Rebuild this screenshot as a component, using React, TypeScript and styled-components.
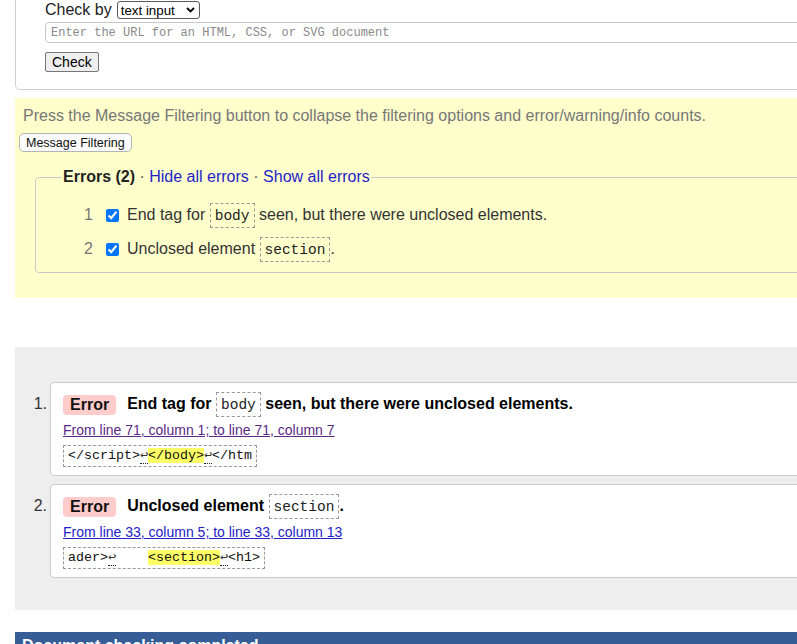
import React from "react";
import styled, { createGlobalStyle } from "styled-components";

const GlobalStyle = createGlobalStyle`
  html, body {
    margin: 0;
    padding: 0;
    overflow: hidden;
    background: #fff;
  }
  body {
    font-family: "Liberation Sans", Arial, sans-serif;
    font-size: 16px;
    color: #222;
  }
`;

const Page = styled.div`
  width: 1000px;
  padding-left: 15px;
  box-sizing: border-box;
`;

const FormBox = styled.div`
  border: 1px solid #cfcfcf;
  border-top: none;
  border-radius: 0 0 5px 5px;
  padding: 0 0 17px 29px;
`;

const CheckRow = styled.div`
  display: flex;
  align-items: center;
  gap: 5px;
  height: 20px;
  line-height: 18px;
  color: #222;
`;

const SelectWrap = styled.span`
  position: relative;
  display: inline-block;
  height: 18px;
`;

const Select = styled.select`
  appearance: none;
  -webkit-appearance: none;
  display: block;
  width: 83px;
  height: 18px;
  box-sizing: border-box;
  border: 1px solid #5a5a5a;
  border-radius: 3px;
  background: #fff;
  font-family: "Liberation Sans", Arial, sans-serif;
  font-size: 13.33px;
  color: #000;
  padding: 0 0 0 3px;
  margin: 0;
`;

const Chevron = styled.svg`
  position: absolute;
  right: 5px;
  top: 6px;
  pointer-events: none;
`;

const UrlInput = styled.input`
  display: block;
  width: 100%;
  height: 21px;
  box-sizing: border-box;
  margin: 2px 0 0 0;
  border: 1px solid #c8c8c8;
  border-radius: 4px;
  padding: 0 5px;
  font-family: "Liberation Mono", "DejaVu Sans Mono", monospace;
  font-size: 12px;
  &::placeholder {
    color: #8a8a8a;
  }
`;

const GreyButton = styled.button`
  display: block;
  margin-top: 9px;
  height: 20px;
  padding: 0 6px;
  box-sizing: border-box;
  border: 1px solid #767676;
  border-radius: 2px;
  background: #efefef;
  font-family: "Liberation Sans", Arial, sans-serif;
  font-size: 14px;
  color: #000;
`;

const FilterPanel = styled.div`
  margin-top: 8px;
  background: #ffffcc;
  padding: 9px 0 25px 4px;
`;

const Intro = styled.p`
  margin: 0;
  padding-left: 4px;
  color: #777;
  font-size: 16px;
  line-height: 18px;
`;

const FilterButton = styled.button`
  display: block;
  margin-top: 8px;
  height: 19px;
  padding: 0 6px;
  box-sizing: border-box;
  border: 1px solid #b4b4b4;
  border-radius: 5px;
  background: #fbfbfb;
  font-family: "Liberation Sans", Arial, sans-serif;
  font-size: 12.5px;
  color: #111;
`;

const Fieldset = styled.fieldset`
  margin: 16px 0 0 16px;
  padding: 0 0 6px 26px;
  border: 1px solid #c9c9c9;
  border-radius: 4px;
  min-width: 0;
`;

const Legend = styled.legend`
  padding: 0 1px;
  font-size: 16px;
  line-height: 18px;
  color: #555;
`;

const LegendTitle = styled.strong`
  color: #222;
`;

const BlueLink = styled.a`
  color: #2323c8;
  text-decoration: none;
`;

const FilterList = styled.div`
  margin-top: 12px;
  display: flex;
  flex-direction: column;
`;

const FilterRow = styled.div`
  display: flex;
  align-items: center;
  height: 34px;
`;

const RowNum = styled.span`
  width: 31px;
  text-align: right;
  color: #777;
  line-height: 18px;
`;

const Check = styled.input`
  margin: 0 8px 0 13px;
  width: 13px;
  height: 13px;
  accent-color: #0075ff;
`;

const RowText = styled.span`
  color: #333;
  line-height: 18px;
`;

const Code = styled.code<{ $bg?: string }>`
  display: inline-block;
  font-family: "Liberation Mono", "DejaVu Sans Mono", monospace;
  font-size: 14.5px;
  font-weight: normal;
  line-height: 17px;
  padding: 4px 4px 2px;
  border: 1px dashed #999;
  color: #222;
  background: ${(p) => p.$bg || "transparent"};
`;

const ResultsPanel = styled.div`
  margin-top: 49px;
  background: #eeeeee;
  padding: 35px 0 32px 0;
  display: flex;
  flex-direction: column;
  gap: 8px;
`;

const ResultItem = styled.div`
  display: flex;
  align-items: flex-start;
`;

const ItemNum = styled.span`
  width: 35px;
  box-sizing: border-box;
  padding: 13px 3px 0 0;
  text-align: right;
  line-height: 18px;
  color: #333;
`;

const Card = styled.div`
  flex: 1;
  background: #fff;
  border: 1px solid #cccccc;
  border-radius: 4px;
  padding: 9px 12px 8px;
  display: flex;
  flex-direction: column;
  align-items: flex-start;
`;

const MessageLine = styled.div`
  display: flex;
  align-items: center;
  height: 25px;
`;

const Badge = styled.span`
  display: inline-block;
  background: #ffcccc;
  border-radius: 4px;
  padding: 1px 7px;
  font-weight: bold;
  font-size: 16px;
  line-height: 18px;
  color: #111;
  margin-right: 11px;
`;

const MessageText = styled.span`
  font-weight: bold;
  color: #000;
  line-height: 18px;
`;

const LocationLink = styled.a<{ $visited?: boolean }>`
  margin-top: 5px;
  font-size: 14px;
  line-height: 16px;
  color: ${(p) => (p.$visited ? "#5a2a86" : "#2323c8")};
  text-decoration: underline;
`;

const Extract = styled.code`
  display: inline-block;
  margin-top: 7px;
  border: 1px dashed #999;
  padding: 0 4px;
  font-family: "Liberation Mono", "DejaVu Sans Mono", monospace;
  font-size: 13.33px;
  line-height: 20px;
  white-space: pre;
  color: #111;
`;

const Mark = styled.mark`
  background: #ffff66;
  color: #111;
`;

const LineFeed = styled.span`
  border-bottom: 1px dotted #222;
  color: #333;
`;

const DoneBar = styled.div`
  margin-top: 22px;
  background: #365d95;
  color: #fff;
  font-weight: bold;
  font-size: 16px;
  line-height: 18px;
  padding: 5px 7px 10px;
`;

const LF = () => <LineFeed>↩</LineFeed>;

export default function App() {
  return (
    <>
      <GlobalStyle />
      <Page>
        <FormBox>
          <CheckRow>
            <span>Check by</span>
            <SelectWrap>
              <Select defaultValue="text">
                <option value="text">text input</option>
              </Select>
              <Chevron width="9" height="6" viewBox="0 0 9 6">
                <path d="M1 1 L4.5 4.5 L8 1" fill="none" stroke="#000" strokeWidth="1.8" />
              </Chevron>
            </SelectWrap>
          </CheckRow>
          <UrlInput placeholder="Enter the URL for an HTML, CSS, or SVG document" />
          <GreyButton>Check</GreyButton>
        </FormBox>

        <FilterPanel>
          <Intro>
            Press the Message Filtering button to collapse the filtering options and error/warning/info counts.
          </Intro>
          <FilterButton>Message Filtering</FilterButton>
          <Fieldset>
            <Legend>
              <LegendTitle>Errors (2)</LegendTitle> · <BlueLink href="#">Hide all errors</BlueLink> ·{" "}
              <BlueLink href="#">Show all errors</BlueLink>
            </Legend>
            <FilterList>
              <FilterRow>
                <RowNum>1</RowNum>
                <Check type="checkbox" defaultChecked />
                <RowText>
                  End tag for <Code>body</Code> seen, but there were unclosed elements.
                </RowText>
              </FilterRow>
              <FilterRow>
                <RowNum>2</RowNum>
                <Check type="checkbox" defaultChecked />
                <RowText>
                  Unclosed element <Code>section</Code>.
                </RowText>
              </FilterRow>
            </FilterList>
          </Fieldset>
        </FilterPanel>

        <ResultsPanel>
          <ResultItem>
            <ItemNum>1.</ItemNum>
            <Card>
              <MessageLine>
                <Badge>Error</Badge>
                <MessageText>
                  End tag for <Code $bg="#fff">body</Code> seen, but there were unclosed elements.
                </MessageText>
              </MessageLine>
              <LocationLink $visited href="#">
                From line 71, column 1; to line 71, column 7
              </LocationLink>
              <Extract>
                {"</script>"}
                <LF />
                <Mark>{"</body>"}</Mark>
                <LF />
                {"</htm"}
              </Extract>
            </Card>
          </ResultItem>
          <ResultItem>
            <ItemNum>2.</ItemNum>
            <Card>
              <MessageLine>
                <Badge>Error</Badge>
                <MessageText>
                  Unclosed element <Code $bg="#fff">section</Code>.
                </MessageText>
              </MessageLine>
              <LocationLink href="#">From line 33, column 5; to line 33, column 13</LocationLink>
              <Extract>
                {"ader>"}
                <LF />
                {"    "}
                <Mark>{"<section>"}</Mark>
                <LF />
                {"<h1>"}
              </Extract>
            </Card>
          </ResultItem>
        </ResultsPanel>

        <DoneBar>Document checking completed.</DoneBar>
      </Page>
    </>
  );
}
